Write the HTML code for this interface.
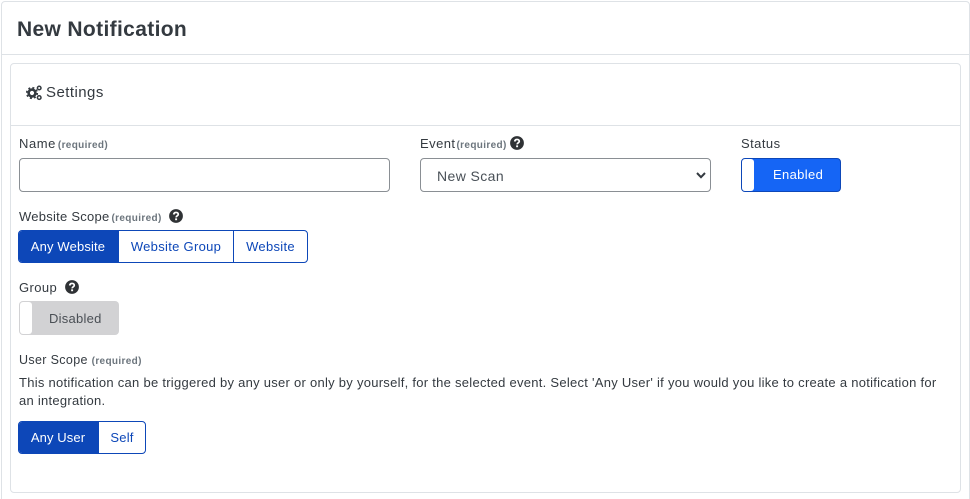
<!DOCTYPE html>
<html style="height:499px;overflow:hidden"><head><meta charset="utf-8">
<style>
html,body{margin:0;padding:0;background:#fff}
body{width:970px;height:499px;font-family:"Liberation Sans",sans-serif;color:#343a40;font-size:13px}
#w{position:relative;width:970px;height:499px;overflow:hidden}
.a{position:absolute;white-space:nowrap;line-height:18px}
.box{position:absolute;box-sizing:border-box}
.r{font-size:10px;color:#6c757d;font-weight:700;letter-spacing:.35px}
.b{color:#0d47b8;text-align:center;line-height:31px;top:0;position:absolute;height:31px}
</style></head><body><div id="w">
<div class="box" style="left:1px;top:1px;width:969px;height:520px;border:1px solid #dee2e6;border-radius:4px"></div>
<div class="box" style="left:2px;top:54px;width:967px;height:1px;background:#dee2e6"></div>
<div class="a" style="left:17px;top:17px;font-size:21px;line-height:26px;font-weight:700;color:#343a40;letter-spacing:.35px">New Notification</div>

<div class="box" style="left:10px;top:63px;width:951px;height:430px;border:1px solid #dee2e6;border-radius:4px"></div>
<div class="box" style="left:11px;top:125px;width:949px;height:1px;background:#dee2e6"></div>
<svg class="box" style="left:26px;top:85px" width="16" height="16" viewBox="0 0 16 16"><circle cx="6" cy="8" r="3.4" fill="none" stroke="#343a40" stroke-width="2.6"/><circle cx="6" cy="8" r="5.3" fill="none" stroke="#343a40" stroke-width="1.6" stroke-dasharray="2 2.2"/><circle cx="13.2" cy="3" r="1.8" fill="none" stroke="#343a40" stroke-width="1.5"/><circle cx="13.2" cy="12.6" r="1.8" fill="none" stroke="#343a40" stroke-width="1.5"/></svg>
<div class="a" style="left:46px;top:84px;font-size:15px;letter-spacing:.45px">Settings</div>

<div class="a" style="left:19px;top:135px;letter-spacing:.55px">Name<span class="r" style="margin-left:2px">(required)</span></div>
<div class="box" style="left:19px;top:158px;width:371px;height:34px;border:1px solid #8a8f94;border-radius:4px"></div>

<div class="a" style="left:420px;top:135px;letter-spacing:.45px">Event<span class="r" style="margin-left:1px">(required)</span></div>
<svg class="box" style="left:510px;top:136px" width="14" height="14" viewBox="0 0 13 13"><circle cx="6.5" cy="6.5" r="6.4" fill="#2f3235"/><path d="M4.4 5.1C4.5 3.9 5.4 3.2 6.5 3.2C7.7 3.2 8.6 3.9 8.6 5C8.6 6.4 6.6 6.3 6.6 7.8" fill="none" stroke="#fff" stroke-width="1.6"/><rect x="5.7" y="8.7" width="1.8" height="1.7" fill="#fff"/></svg>
<div class="box" style="left:420px;top:158px;width:291px;height:34px;border:1px solid #8a8f94;border-radius:4px"></div>
<div class="a" style="left:437px;top:167px;font-size:14px;color:#495057;letter-spacing:.4px">New Scan</div>
<svg class="box" style="left:695px;top:171px" width="12" height="9" viewBox="0 0 12 9"><path d="M2 2L6 6.2L10 2" fill="none" stroke="#343a40" stroke-width="2"/></svg>

<div class="a" style="left:741px;top:135px;letter-spacing:.45px">Status</div>
<div class="box" style="left:741px;top:158px;width:100px;height:34px;background:#1565f5;border:1px solid #0d47b8;border-radius:4px"></div>
<div class="box" style="left:742px;top:159px;width:12px;height:32px;background:#fff;border-radius:3px"></div>
<div class="a" style="left:773px;top:166px;color:#fff;letter-spacing:.35px">Enabled</div>

<div class="a" style="left:19px;top:208px;letter-spacing:.25px">Website Scope<span class="r" style="margin-left:2px">(required)</span></div>
<svg class="box" style="left:169px;top:209px" width="14" height="14" viewBox="0 0 13 13"><circle cx="6.5" cy="6.5" r="6.4" fill="#2f3235"/><path d="M4.4 5.1C4.5 3.9 5.4 3.2 6.5 3.2C7.7 3.2 8.6 3.9 8.6 5C8.6 6.4 6.6 6.3 6.6 7.8" fill="none" stroke="#fff" stroke-width="1.6"/><rect x="5.7" y="8.7" width="1.8" height="1.7" fill="#fff"/></svg>
<div class="box" style="left:18px;top:230px;width:290px;height:33px;border:1px solid #0d47b8;border-radius:4px;overflow:hidden">
<div class="b" style="left:0;width:100px;background:#0d47b8;color:#fff;letter-spacing:.15px;text-indent:-2px">Any Website</div>
<div class="b" style="left:100px;width:114px;border-right:1px solid #0d47b8;letter-spacing:.3px">Website Group</div>
<div class="b" style="left:215px;width:73px;letter-spacing:.3px">Website</div>
</div>

<div class="a" style="left:19px;top:279px;letter-spacing:.4px">Group</div>
<svg class="box" style="left:65px;top:280px" width="14" height="14" viewBox="0 0 13 13"><circle cx="6.5" cy="6.5" r="6.4" fill="#2f3235"/><path d="M4.4 5.1C4.5 3.9 5.4 3.2 6.5 3.2C7.7 3.2 8.6 3.9 8.6 5C8.6 6.4 6.6 6.3 6.6 7.8" fill="none" stroke="#fff" stroke-width="1.6"/><rect x="5.7" y="8.7" width="1.8" height="1.7" fill="#fff"/></svg>
<div class="box" style="left:19px;top:301px;width:100px;height:34px;background:#d2d2d4;border-radius:4px"></div>
<div class="box" style="left:20px;top:302px;width:12px;height:32px;background:#fff;border-radius:3px"></div>
<div class="a" style="left:49px;top:310px;letter-spacing:.25px;color:#4a4f55">Disabled</div>

<div class="a" style="left:19px;top:351px;font-size:12.5px;letter-spacing:.35px">User Scope <span class="r">(required)</span></div>
<div class="a" style="left:19px;top:374px;font-size:13px;letter-spacing:.27px;line-height:18px">This notification can be triggered by any user or only by yourself, for the selected event. Select 'Any User' if you would you like to create a notification for<br>an integration.</div>
<div class="box" style="left:18px;top:421px;width:128px;height:33px;border:1px solid #0d47b8;border-radius:4px;overflow:hidden">
<div class="b" style="left:0;width:80px;background:#0d47b8;color:#fff;letter-spacing:.1px;text-indent:-2px">Any User</div>
<div class="b" style="left:80px;width:46px;letter-spacing:.2px">Self</div>
</div>
</div></body></html>
